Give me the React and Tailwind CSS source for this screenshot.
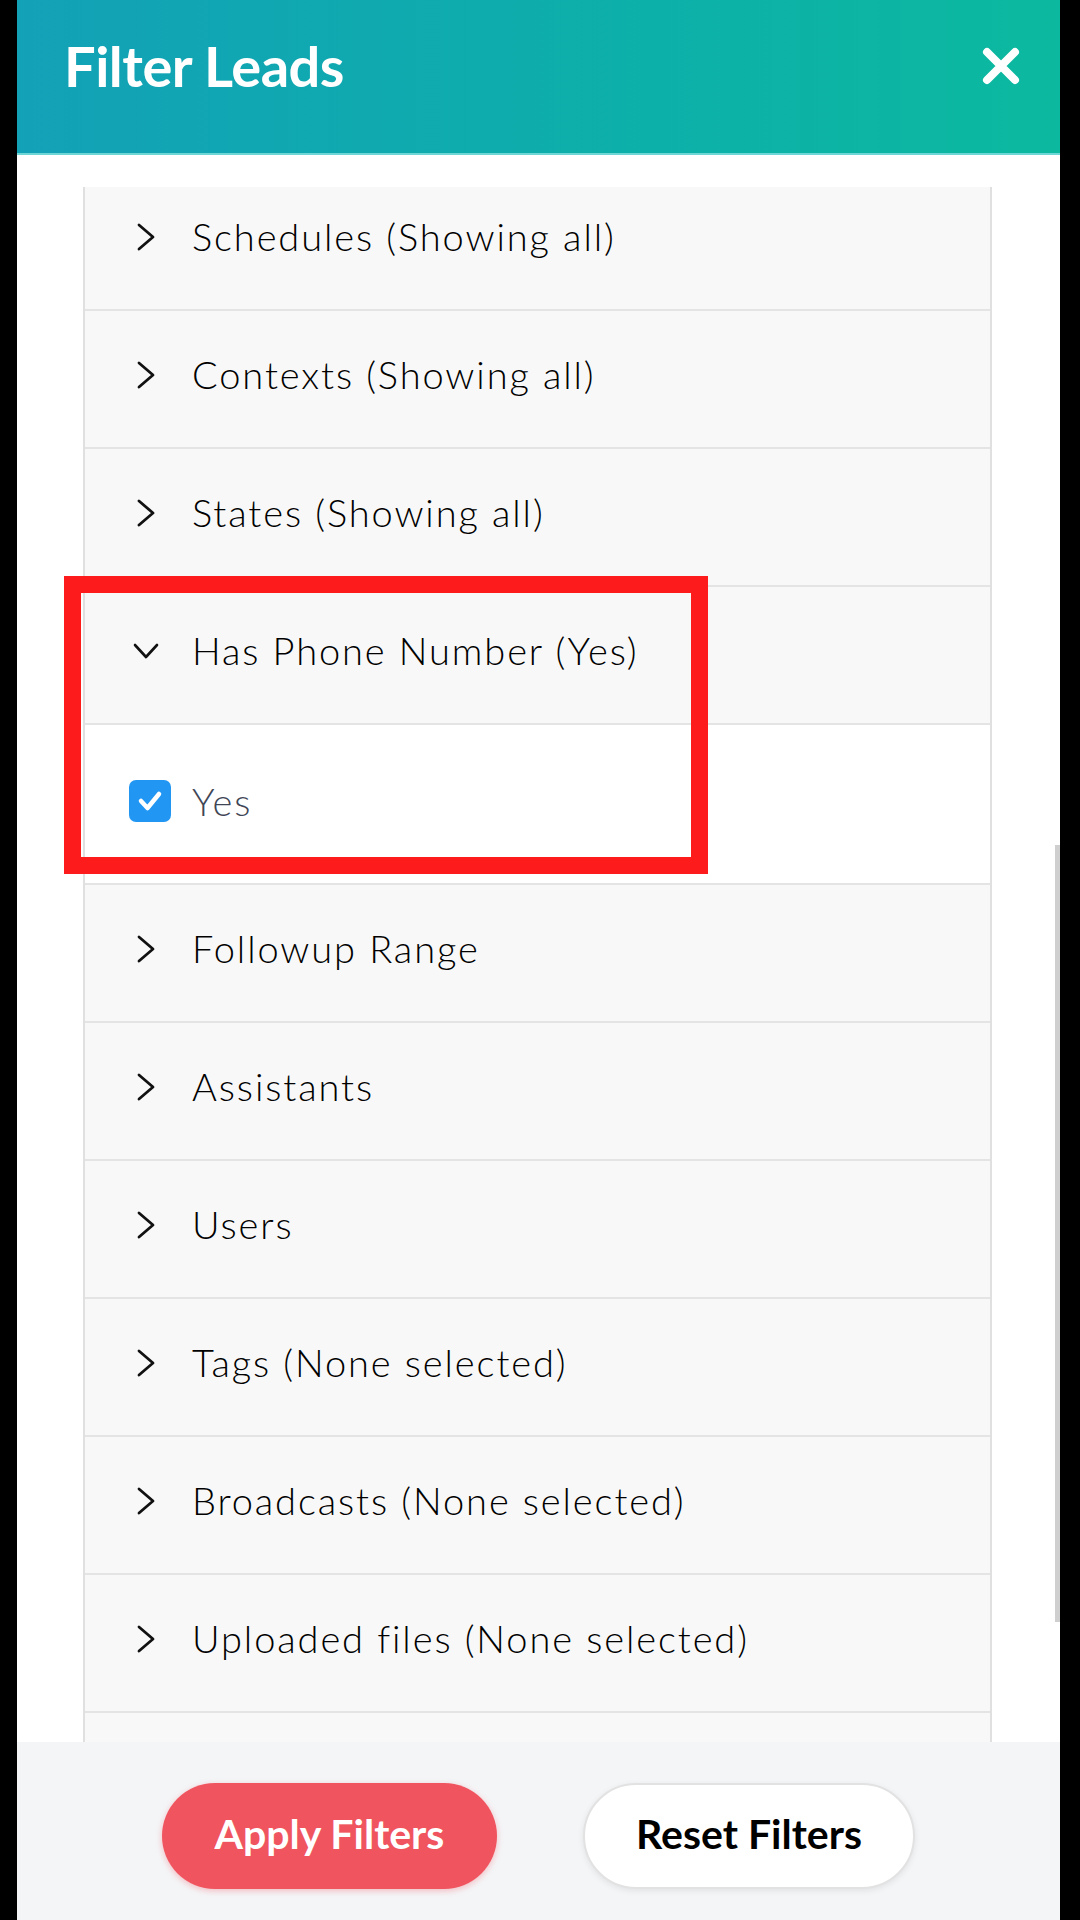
import React from 'react';

const rowsBefore = ['Schedules (Showing all)', 'Contexts (Showing all)', 'States (Showing all)'];
const rowsAfter = [
  'Followup Range',
  'Assistants',
  'Users',
  'Tags (None selected)',
  'Broadcasts (None selected)',
  'Uploaded files (None selected)',
];

const ChevronRight = () => (
  <svg width="20" height="30" viewBox="0 0 20 30" fill="none">
    <polyline points="3,3 17,15 3,27" stroke="#111" strokeWidth="2.8" strokeLinecap="round" strokeLinejoin="round" />
  </svg>
);

const ChevronDown = () => (
  <svg width="26" height="18" viewBox="0 0 26 18" fill="none">
    <polyline points="2,3 13,15 24,3" stroke="#111" strokeWidth="2.6" strokeLinecap="round" strokeLinejoin="round" />
  </svg>
);

const Row = ({ label, open }) => (
  <div className="flex h-[138px] shrink-0 items-center border-b-2 border-[#e4e4e4] bg-[#f8f8f8] pb-[9px] pl-[48px]">
    <div className="flex w-[26px] justify-center">{open ? <ChevronDown /> : <ChevronRight />}</div>
    <span className="ml-[33px] text-[38px] font-light tracking-[0.05em] text-black">{label}</span>
  </div>
);

export default function App() {
  return (
    <div className="relative h-[1920px] w-[1080px] bg-black pl-[17px] pr-[20px] font-['Lato',sans-serif]">
      <div className="flex h-full flex-col bg-white">
        {/* Header */}
        <div className="flex h-[155px] shrink-0 items-center justify-between border-b-2 border-[#6fd6d6] bg-linear-to-r from-[#13a1b7] to-[#0cb99f] pb-[22px] pl-[47px] pr-[40px]">
          <h1 className="text-[56px] font-bold tracking-[-0.5px] text-white">Filter Leads</h1>
          <svg width="38" height="38" viewBox="0 0 38 38">
            <path d="M5 5 L33 33 M33 5 L5 33" stroke="#fff" strokeWidth="8" strokeLinecap="round" />
          </svg>
        </div>

        {/* Body */}
        <div className="relative flex flex-1 flex-col overflow-hidden pl-[66px] pr-[68px] pt-[32px]">
          <div className="flex-1 overflow-hidden">
            <div className="-mt-[14px] flex flex-col border-x-2 border-[#e0e0e0]">
              {rowsBefore.map((r) => (
                <Row key={r} label={r} />
              ))}
              <Row label="Has Phone Number (Yes)" open />
              <div className="flex h-[160px] shrink-0 items-center border-b-2 border-[#e4e4e4] bg-white pb-[6px] pl-[44px]">
                <div className="flex h-[42px] w-[42px] items-center justify-center rounded-[7px] bg-[#2196f3]">
                  <svg width="30" height="30" viewBox="0 0 30 30" fill="none">
                    <polyline points="6,15 12.5,22 24,8" stroke="#fff" strokeWidth="4.5" strokeLinecap="round" strokeLinejoin="round" />
                  </svg>
                </div>
                <span className="ml-[21px] text-[38px] font-light tracking-[0.05em] text-[#3f4656]">Yes</span>
              </div>
              {rowsAfter.map((r) => (
                <Row key={r} label={r} />
              ))}
              <div className="h-[138px] shrink-0 bg-[#f8f8f8]" />
            </div>
          </div>
          {/* scrollbar */}
          <div className="absolute right-0 top-[690px] h-[777px] w-[5px] bg-[#cfcfcf]" />
        </div>

        {/* Footer */}
        <div className="flex h-[178px] shrink-0 items-center justify-center gap-[86px] bg-[#f4f5f7] pt-[10px]">
          <button className="h-[106px] w-[335px] rounded-full bg-[#f0545e] pb-[4px] text-[41px] font-bold text-white shadow-[0_2px_6px_rgba(240,84,94,0.35)]">
            Apply Filters
          </button>
          <button className="h-[106px] w-[332px] rounded-full border-2 border-[#e2e2e2] bg-white pb-[4px] text-[41px] font-bold text-black shadow-[0_2px_6px_rgba(0,0,0,0.08)]">
            Reset Filters
          </button>
        </div>
      </div>

      {/* red annotation box */}
      <div className="absolute left-[64px] top-[576px] h-[298px] w-[644px] border-[17px] border-[#fe1b1c]" />
    </div>
  );
}
